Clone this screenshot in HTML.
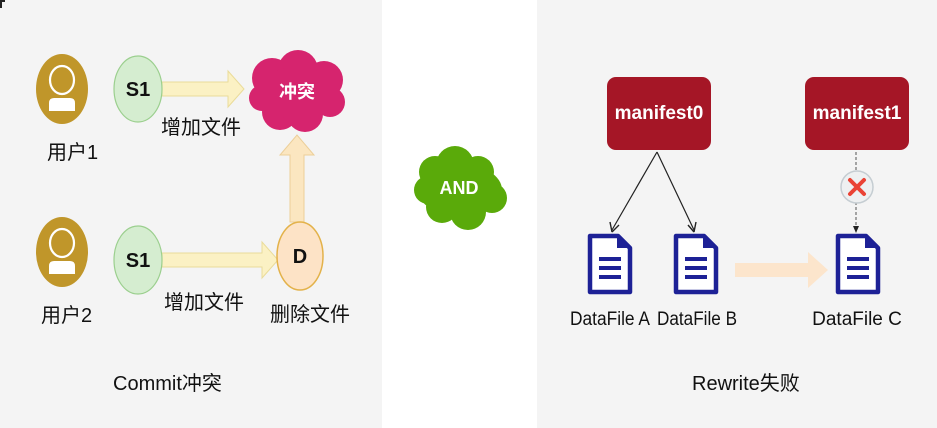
<!DOCTYPE html>
<html><head><meta charset="utf-8"><style>
body{margin:0;width:937px;height:428px;overflow:hidden;background:#fff;font-family:"Liberation Sans","Noto Sans CJK SC",sans-serif}
</style></head><body>
<svg width="937" height="428" xmlns="http://www.w3.org/2000/svg" style="position:absolute;left:0;top:0">
<rect x="0" y="0" width="382" height="428" fill="#f4f4f4"/>
<rect x="537" y="0" width="400" height="428" fill="#f4f4f4"/>
<rect x="0" y="0" width="5" height="2" fill="#222"/><rect x="0" y="0" width="2" height="8" fill="#222"/>
<defs>
<g id="user"><ellipse cx="0" cy="0" rx="26" ry="35" fill="#c0962a"/>
<ellipse cx="0" cy="-9" rx="12" ry="14" fill="none" stroke="#fff" stroke-width="2.2"/>
<path d="M-13 22 V14 Q-13 9 -8 9 H8 Q13 9 13 14 V22 Z" fill="#fff"/></g>
<g id="file"><path d="M2 2 H30 L42 14 V58 H2 Z" fill="#fff" stroke="#1d2196" stroke-width="4.5" stroke-linejoin="round"/>
<path d="M29 2 V14 H42 Z" fill="#1d2196"/>
<rect x="11" y="23" width="22" height="4" fill="#1d2196"/><rect x="11" y="32" width="22" height="4" fill="#1d2196"/><rect x="11" y="41" width="22" height="4" fill="#1d2196"/></g>
</defs>
<use href="#user" x="62" y="89"/><use href="#user" x="62" y="252"/>
<text x="47" y="159" font-size="20" fill="#111">用户1</text>
<text x="41" y="322" font-size="20" fill="#111">用户2</text>
<path d="M162 82 H228 V71 L244 89 L228 107 V96 H162 Z" fill="#fbf1c4" stroke="#eadc9a" stroke-width="1"/>
<path d="M162 253 H262 V242 L278 260 L262 278 V267 H162 Z" fill="#fbf1c4" stroke="#eadc9a" stroke-width="1"/>
<path d="M290 222 V155 H280 L297 135 L314 155 H304 V222 Z" fill="#fbe6c0" stroke="#eccf99" stroke-width="1"/>
<ellipse cx="138" cy="89" rx="24" ry="33" fill="#d5edd0" stroke="#9bcf8e" stroke-width="1.2"/>
<text x="138" y="96" font-size="20" font-weight="bold" text-anchor="middle" fill="#111">S1</text>
<ellipse cx="138" cy="260" rx="24" ry="34" fill="#d5edd0" stroke="#9bcf8e" stroke-width="1.2"/>
<text x="138" y="267" font-size="20" font-weight="bold" text-anchor="middle" fill="#111">S1</text>
<ellipse cx="300" cy="256" rx="23" ry="34" fill="#fde3c6" stroke="#e3b24a" stroke-width="1.5"/>
<text x="300" y="263" font-size="20" font-weight="bold" text-anchor="middle" fill="#111">D</text>
<text x="161" y="134" font-size="20" fill="#111">增加文件</text>
<text x="164" y="309" font-size="20" fill="#111">增加文件</text>
<text x="270" y="321" font-size="20" fill="#111">删除文件</text>
<g fill="#d6246e"><circle cx="272" cy="78" r="20"/><circle cx="298" cy="70" r="20"/><circle cx="324" cy="80" r="19"/><circle cx="330" cy="102" r="15"/><circle cx="305" cy="114" r="18"/><circle cx="280" cy="112" r="18"/><circle cx="262" cy="98" r="13"/><ellipse cx="297" cy="93" rx="40" ry="26"/></g>
<text x="297" y="98" font-size="18" font-weight="bold" text-anchor="middle" fill="#fff">冲突</text>
<text x="113" y="390" font-size="20" fill="#111">Commit冲突</text>
<g fill="#5aaa0a"><circle cx="435" cy="172" r="16"/><circle cx="455" cy="165" r="19"/><circle cx="478" cy="172" r="16"/><circle cx="492" cy="198" r="15"/><circle cx="468" cy="212" r="18"/><circle cx="442" cy="207" r="16"/><circle cx="428" cy="190" r="14"/><ellipse cx="460" cy="190" rx="42" ry="26"/></g>
<text x="459" y="194" font-size="18" font-weight="bold" text-anchor="middle" fill="#fff">AND</text>
<rect x="607" y="77" width="104" height="73" rx="9" fill="#a51626"/>
<text x="659" y="119" font-size="19" font-weight="bold" text-anchor="middle" fill="#fff">manifest0</text>
<rect x="805" y="77" width="104" height="73" rx="9" fill="#a51626"/>
<text x="857" y="119" font-size="19" font-weight="bold" text-anchor="middle" fill="#fff">manifest1</text>
<path d="M657 152 L612 230 M657 152 L694 230" stroke="#222" stroke-width="1.2"/>
<path d="M612 232 L610 222 M612 232 L619 225 M694 232 L688 225 M694 232 L696 222" stroke="#222" stroke-width="1.4"/>
<path d="M856 152 V232" stroke="#555" stroke-width="1" stroke-dasharray="3,2"/>
<path d="M853 226 L856 233 L859 226 Z" fill="#222"/>
<circle cx="857" cy="187" r="16" fill="#eef0f1" stroke="#c5cdd2" stroke-width="1.5"/>
<path d="M850 180 L864 194 M864 180 L850 194" stroke="#ea4335" stroke-width="4" stroke-linecap="round"/>
<use href="#file" x="588" y="234"/><use href="#file" x="674" y="234"/><use href="#file" x="836" y="234"/>
<path d="M735 263 H808 V252 L828 270 L808 288 V277 H735 Z" fill="#fce5cc"/>
<text x="610" y="325" font-size="19" text-anchor="middle" fill="#111" textLength="80" lengthAdjust="spacingAndGlyphs">DataFile A</text>
<text x="697" y="325" font-size="19" text-anchor="middle" fill="#111" textLength="80" lengthAdjust="spacingAndGlyphs">DataFile B</text>
<text x="857" y="325" font-size="19" text-anchor="middle" fill="#111">DataFile C</text>
<text x="692" y="390" font-size="20" fill="#111">Rewrite失败</text>
</svg>
</body></html>
